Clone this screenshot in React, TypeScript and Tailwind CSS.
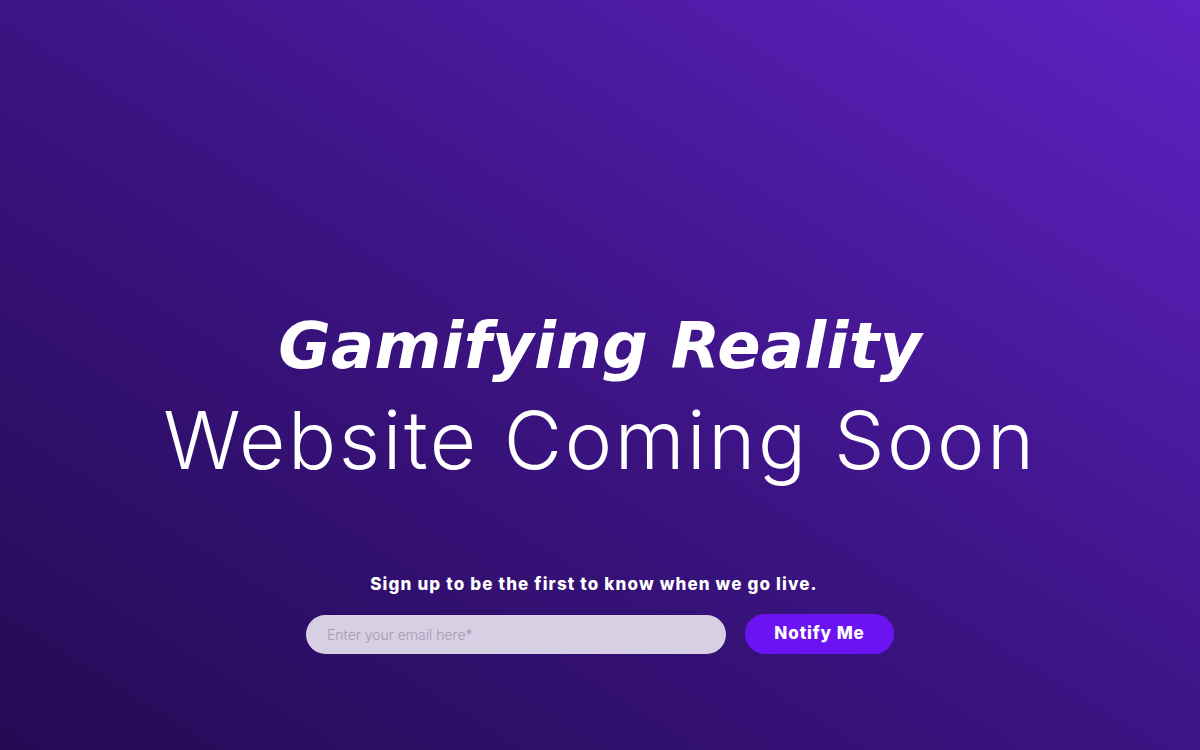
export default function App() {
  return (
    <div className="relative h-[750px] w-full overflow-hidden bg-[linear-gradient(to_top_right,#240a53_0%,#3c1484_50%,#5f21c3_100%)]">
      <div className="flex flex-col items-center pt-[310px] text-white">
        <h1 className="font-['DejaVu_Sans',sans-serif] text-[64px] leading-[72px] font-bold italic tracking-[0.3px]">
          Gamifying Reality
        </h1>
        <h2 className="mt-3 font-['Inter',sans-serif] text-[80px] leading-[92px] font-light tracking-[2.6px]">
          Website Coming Soon
        </h2>
        <p className="mt-[86px] mr-3 font-['Inter',sans-serif] text-[17px] leading-6 font-extrabold tracking-[1.15px]">
          Sign up to be the first to know when we go live.
        </p>
        <form className="mt-[18px] flex items-center gap-[19px]" onSubmit={(e) => e.preventDefault()}>
          <input
            type="email"
            placeholder="Enter your email here*"
            className="h-[39px] w-[420px] rounded-full bg-[#d7d0e4] px-[21px] font-['Inter',sans-serif] text-[14px] font-light text-gray-700 outline-none placeholder:text-[#a29bb0]"
          />
          <button
            type="submit"
            className="h-[40px] w-[149px] rounded-full bg-[#6b14f1] font-['Inter',sans-serif] text-[17px] font-extrabold tracking-[0.9px] text-white"
          >
            Notify Me
          </button>
        </form>
      </div>
    </div>
  )
}
